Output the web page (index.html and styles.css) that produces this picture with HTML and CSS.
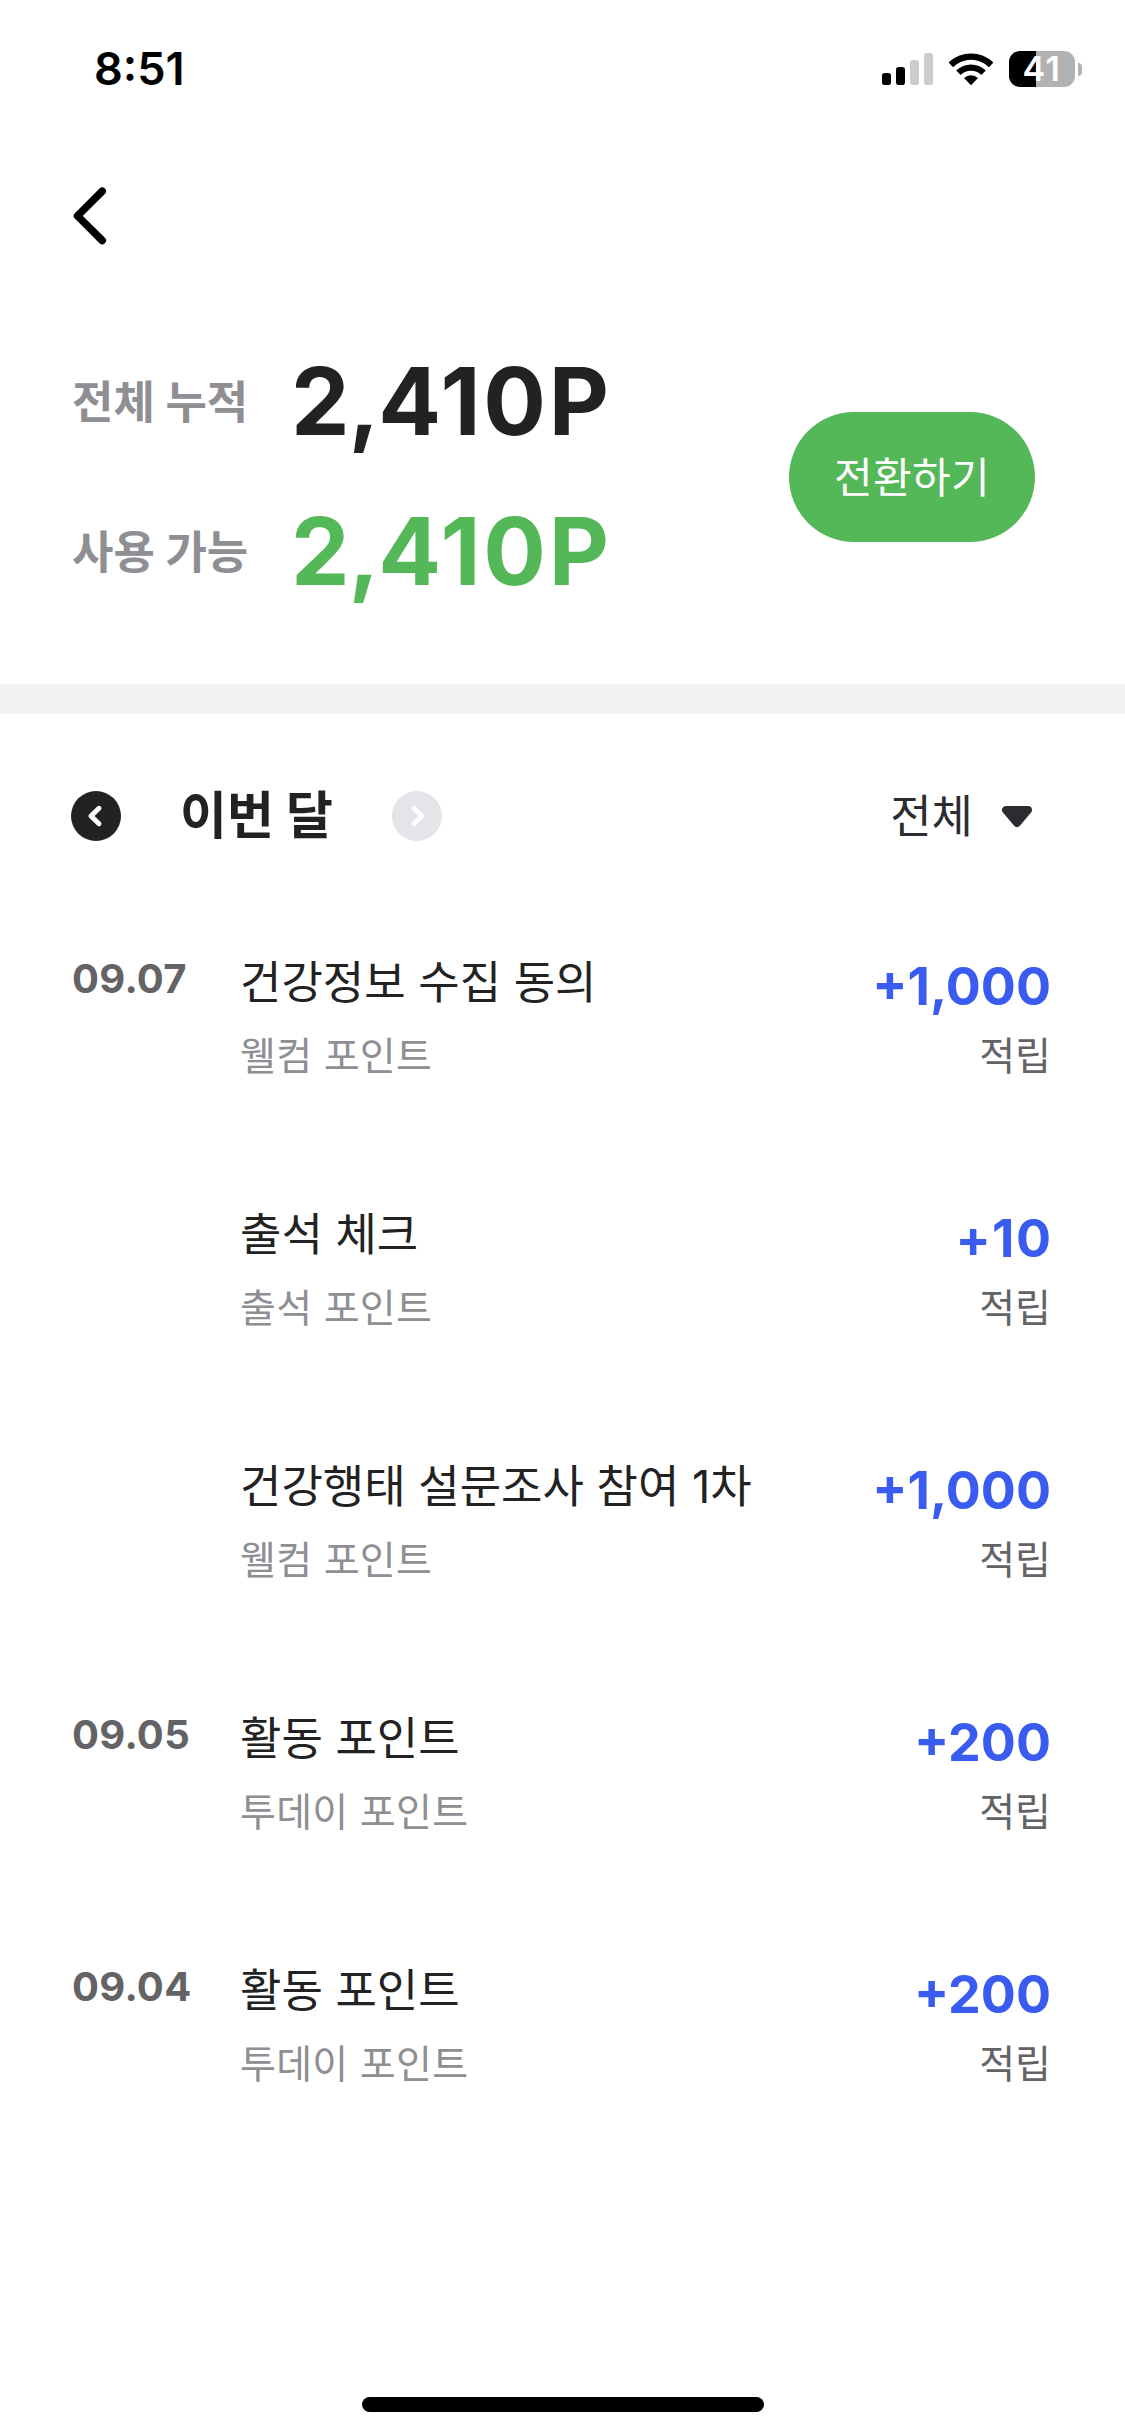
FILE: index.html
```html
<!DOCTYPE html>
<html lang="ko">
<head>
<meta charset="utf-8">
<title>포인트</title>
<link rel="stylesheet" href="styles.css">
</head>
<body>
<header class="status">
  <span class="time">8:51</span>
  <div class="status-icons">
    <svg class="signal" width="52" height="34" viewBox="0 0 52 34">
      <rect x="0" y="21" width="9" height="12" rx="2.8"/>
      <rect x="14" y="15" width="9" height="18" rx="2.8"/>
      <rect x="28" y="8" width="9" height="25" rx="2.8" fill="#ccc"/>
      <rect x="42" y="1" width="9" height="32" rx="2.8" fill="#ccc"/>
    </svg>
    <svg class="wifi" width="46" height="34" viewBox="0 0 46 34">
      <path d="M0.6 10.6A32 32 0 0 1 45.4 10.6L41 15.2A25.7 25.7 0 0 0 5 15.2Z"/>
      <path d="M8.2 18.4A21.2 21.2 0 0 1 37.8 18.4L33.3 22.9A14.9 14.9 0 0 0 12.7 22.9Z"/>
      <path d="M16 26.1A10.2 10.2 0 0 1 30 26.1L23 33.2Z"/>
    </svg>
    <div class="battery"><span class="battery-body">41</span><span class="battery-cap"></span></div>
  </div>
</header>
<nav class="nav">
  <svg width="40" height="60" viewBox="0 0 40 60"><path d="M32.2 5.3L7.5 29.9L32.2 54.5" fill="none" stroke="#000" stroke-width="7.6" stroke-linecap="round" stroke-linejoin="round"/></svg>
</nav>
<section class="summary">
  <dl class="totals">
    <div class="total"><dt>전체 누적</dt><dd><span class="thousands">2,</span>410P</dd></div>
    <div class="total available"><dt>사용 가능</dt><dd><span class="thousands">2,</span>410P</dd></div>
  </dl>
  <button class="convert">전환하기</button>
</section>
<section class="filters">
  <svg class="arrow" width="50" height="50" viewBox="0 0 50 50"><circle cx="25" cy="25" r="25" fill="#222"/><path d="M28 17.3L20 25L28 32.7" fill="none" stroke="#fff" stroke-width="5" stroke-linecap="round" stroke-linejoin="round"/></svg>
  <h1 class="month">이번 달</h1>
  <svg class="arrow" width="50" height="50" viewBox="0 0 50 50"><circle cx="25" cy="25" r="25" fill="#e4e4e9"/><path d="M22 17.3L30 25L22 32.7" fill="none" stroke="#fff" stroke-width="5" stroke-linecap="round" stroke-linejoin="round"/></svg>
  <div class="kind"><span>전체</span>
    <svg width="30" height="22" viewBox="0 0 30 22"><path d="M4 4H26L15 17Z" fill="#2b2c2f" stroke="#2b2c2f" stroke-width="8" stroke-linejoin="round"/></svg>
  </div>
</section>
<ul class="history">
  <li class="entry"><time class="date">09.07</time><div class="what"><p class="title">건강정보 수집 동의</p><p class="source">웰컴 포인트</p></div><div class="gain"><p class="amount">+1,000</p><p class="type">적립</p></div></li>
  <li class="entry"><time class="date"></time><div class="what"><p class="title">출석 체크</p><p class="source">출석 포인트</p></div><div class="gain"><p class="amount short">+10</p><p class="type">적립</p></div></li>
  <li class="entry"><time class="date"></time><div class="what"><p class="title">건강행태 설문조사 참여 1차</p><p class="source">웰컴 포인트</p></div><div class="gain"><p class="amount">+1,000</p><p class="type">적립</p></div></li>
  <li class="entry"><time class="date">09.05</time><div class="what"><p class="title">활동 포인트</p><p class="source">투데이 포인트</p></div><div class="gain"><p class="amount">+200</p><p class="type">적립</p></div></li>
  <li class="entry"><time class="date">09.04</time><div class="what"><p class="title">활동 포인트</p><p class="source">투데이 포인트</p></div><div class="gain"><p class="amount">+200</p><p class="type">적립</p></div></li>
</ul>
<footer class="home"><span class="home-bar"></span></footer>
</body>
</html>
```
FILE: styles.css
```css
* { box-sizing: border-box; margin: 0; padding: 0; }
body {
  width: 1125px; height: 2436px; overflow: hidden;
  display: flex; flex-direction: column;
  background: #fff; color: #222;
  font-family: Inter, "Noto Sans CJK KR", sans-serif;
  white-space: nowrap;
}
svg { display: block; flex: none; }
.status { height: 132px; padding: 0 43px 0 94px; display: flex; justify-content: space-between; align-items: flex-start; color: #000; }
.time { margin-top: 39px; font-size: 45px; line-height: 60px; font-weight: 600; }
.status-icons { display: flex; align-items: flex-start; margin-top: 51px; }
.signal { margin: 1px 14px 0 0; }
.wifi { margin: 1px 15px 0 0; }
.battery { display: flex; align-items: center; gap: 3px; }
.battery-body {
  width: 66px; height: 36px; border-radius: 11px; text-align: center;
  background: linear-gradient(to right, #000 27px, #b2b2b2 27px);
  color: #fff; font-size: 34px; line-height: 36px; font-weight: 600; letter-spacing: 1.5px;
}
.battery-cap { width: 4px; height: 13px; border-radius: 0 4px 4px 0; background: #b2b2b2; }
.nav { height: 194px; padding: 54px 0 0 70px; }
.summary { height: 388px; padding: 0 90px 0 72px; display: flex; justify-content: space-between; border-bottom: 30px solid #f2f2f5; }
.total { display: flex; align-items: center; height: 150px; }
.total dt { width: 219px; padding-top: 4px; font-size: 45px; font-weight: 700; color: #8e8e93; line-height: 60px; }
.total dd { font-size: 93px; line-height: 110px; font-weight: 700; letter-spacing: 2.8px; }
.thousands { letter-spacing: -1.2px; }
.available dd { color: #54b858; }
.convert {
  width: 246px; height: 130px; margin-top: 86px; padding-top: 2px; border: 0; border-radius: 65px;
  background: #54b858; color: #fff; font: inherit; font-size: 42px; line-height: 60px; letter-spacing: 0.4px;
}
.filters { height: 226px; padding: 77px 93px 0 71px; display: flex; align-items: flex-start; }
.month { width: 271px; padding-left: 59px; font-size: 51px; line-height: 50px; font-weight: 700; }
.kind { margin-left: auto; display: flex; align-items: center; gap: 29px; height: 52px; font-size: 45px; line-height: 52px; color: #2b2c2f; }
.history { list-style: none; }
.entry { height: 252px; padding: 9px 74px 0 72px; display: flex; }
.date { width: 168px; font-size: 40px; line-height: 60px; font-weight: 700; letter-spacing: 0.3px; color: #636366; }
.what { flex: 1; padding-top: 4px; }
.title { font-size: 45px; line-height: 60px; margin-bottom: 13px; }
.source { font-size: 39px; line-height: 60px; letter-spacing: 0.3px; color: #8e8e93; }
.gain { padding-top: 8px; text-align: right; }
.amount { font-size: 52px; line-height: 60px; margin-bottom: 9px; font-weight: 700; color: #3a5bf0; }
.short { letter-spacing: 1.4px; margin-right: -1.4px; }
.type { font-size: 39px; line-height: 60px; color: #636366; }
.home { margin-top: auto; height: 39px; display: flex; justify-content: center; }
.home-bar { width: 402px; height: 15px; border-radius: 8px; background: #000; }
```
